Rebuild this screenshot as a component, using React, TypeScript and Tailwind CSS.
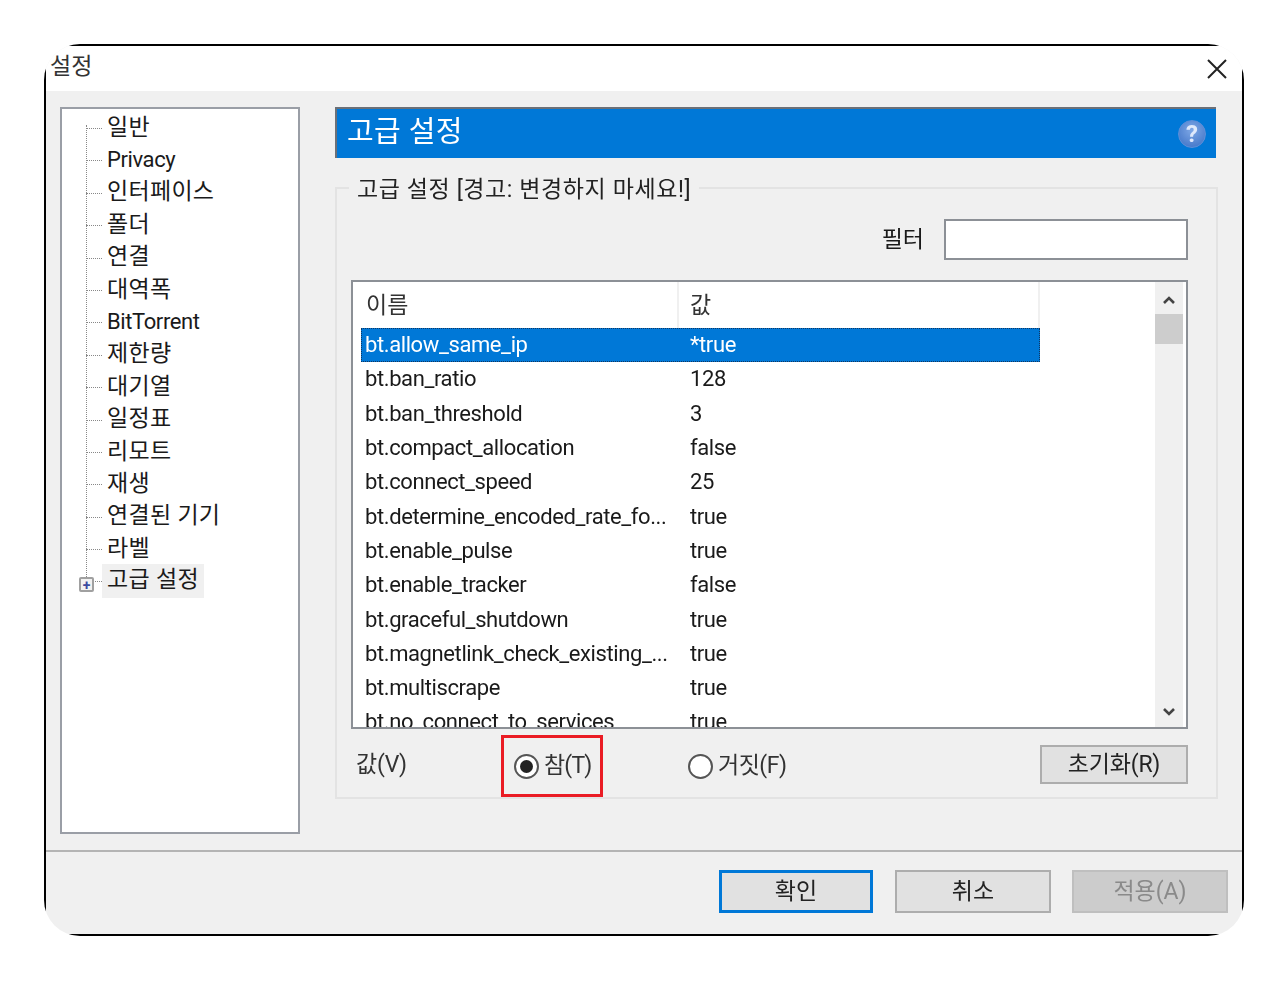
const treeItems = [
  "일반",
  "Privacy",
  "인터페이스",
  "폴더",
  "연결",
  "대역폭",
  "BitTorrent",
  "제한량",
  "대기열",
  "일정표",
  "리모트",
  "재생",
  "연결된 기기",
  "라벨",
  "고급 설정",
];

const rows = [
  ["bt.allow_same_ip", "*true"],
  ["bt.ban_ratio", "128"],
  ["bt.ban_threshold", "3"],
  ["bt.compact_allocation", "false"],
  ["bt.connect_speed", "25"],
  ["bt.determine_encoded_rate_fo...", "true"],
  ["bt.enable_pulse", "true"],
  ["bt.enable_tracker", "false"],
  ["bt.graceful_shutdown", "true"],
  ["bt.magnetlink_check_existing_...", "true"],
  ["bt.multiscrape", "true"],
  ["bt.no_connect_to_services", "true"],
];

const Chevron = ({ up }: { up?: boolean }) => (
  <svg width="14" height="10" viewBox="0 0 14 10" fill="none" stroke="#444" strokeWidth="2.6">
    <path d={up ? "M2 8 L7 3 L12 8" : "M2 2 L7 7 L12 2"} />
  </svg>
);

const Tree = () => (
  <div className="relative w-[240px] h-[727px] shrink-0 bg-white border-2 border-[#9a9ea6] pt-[2px]">
    <div className="absolute left-[24px] top-[16px] h-[456px] border-l border-dotted border-[#888]" />
    {treeItems.map((item, i) => {
      const last = i === treeItems.length - 1;
      const latin = /[a-z]/i.test(item);
      return (
        <div key={item} className="flex items-center h-[32.4px]">
          <div className="relative w-[45px] h-full shrink-0">
            <div className="absolute left-[24px] top-[17px] w-[16px] border-t border-dotted border-[#888]" />
            {last && (
              <div className="absolute left-[17px] top-[13px] w-[15px] h-[15px] bg-[#f2f2f2] border-2 border-[#a0a0a0] rounded-[2px] flex items-center justify-center text-[#3b4aa0] text-[14px] leading-none font-bold">
                +
              </div>
            )}
          </div>
          <span
            className={
              last
                ? "bg-[#f0f0f0] px-[5px] -ml-[5px] h-[34px] leading-[32px] tracking-[0.3px]"
                : latin
                  ? "text-[22px] tracking-[-0.4px]"
                  : "tracking-[0.3px]"
            }
          >
            {item}
          </span>
        </div>
      );
    })}
  </div>
);

const AdvancedTable = () => (
  <div className="relative h-[449px] mt-[20px] bg-white border-2 border-[#8c9096] overflow-hidden">
    <div className="flex h-full">
      <div className="w-[679px] shrink-0 ml-[8px]">
        <div className="flex h-[46px] items-center">
          <div className="w-[318px] h-full pl-[5px] flex items-center border-r-2 border-[#f0f0f0] text-[#333]">이름</div>
          <div className="flex-1 h-full pl-[11px] flex items-center border-r-2 border-[#f0f0f0] text-[#333]">값</div>
        </div>
        {rows.map(([name, value], i) => (
          <div
            key={name}
            className={
              i === 0
                ? "flex items-center h-[34.3px] text-[22px] tracking-[-0.4px] bg-[#0078d7] text-white outline-1 outline-dotted -outline-offset-1 outline-[#12365f]"
                : "flex items-center h-[34.3px] text-[22px] tracking-[-0.4px]"
            }
          >
            <div className="w-[329px] pl-[4px] whitespace-nowrap">{name}</div>
            <div>{value}</div>
          </div>
        ))}
      </div>
      <div className="ml-auto mr-[3px] w-[28px] h-full bg-[#f0f0f0] flex flex-col items-center justify-between">
        <div className="w-full">
          <div className="h-[32px] pt-[3px] flex items-center justify-center">
            <Chevron up />
          </div>
          <div className="h-[30px] bg-[#cdcdcd]" />
        </div>
        <div className="h-[30px] flex items-center justify-center">
          <Chevron />
        </div>
      </div>
    </div>
  </div>
);

const SettingsGroup = () => (
  <fieldset className="mt-[15px] h-[626px] border-2 border-[#e3e3e3] pl-[14px] pr-[28px]">
    <legend className="-ml-[2px] px-[8px] h-[30px] leading-[33px] text-[#222] tracking-[0.6px]">
      고급 설정 [경고: 변경하지 마세요!]
    </legend>
    <div className="flex items-center justify-end gap-[20px] mt-[16px]">
      <span>필터</span>
      <div className="w-[244px] h-[41px] bg-white border-2 border-[#8c9096]" />
    </div>
    <AdvancedTable />
    <div className="flex items-center mt-[6px] h-[62px]">
      <span className="w-[150px] pl-[5px] text-[#333] -mt-[3px] tracking-[-0.2px]">값(V)</span>
      <div className="w-[102px] h-[62px] border-[3px] border-[#ea1c24] flex items-center pl-[10px] gap-[5px] text-[#333]">
        <span className="w-[25px] h-[25px] rounded-full bg-white border-2 border-[#555] flex items-center justify-center shrink-0">
          <span className="w-[13px] h-[13px] rounded-full bg-[#222]" />
        </span>
        <span className="whitespace-nowrap -mt-[2px] tracking-[-0.8px]">참(T)</span>
      </div>
      <div className="ml-[85px] flex items-center gap-[5px] text-[#333]">
        <span className="w-[25px] h-[25px] rounded-full bg-white border-2 border-[#555]" />
        <span className="-mt-[2px] tracking-[-0.5px]">거짓(F)</span>
      </div>
      <button className="ml-auto -mt-[3px] w-[148px] h-[39px] bg-[#e1e1e1] border-2 border-[#adadad] text-[#222] tracking-[-0.2px]">초기화(R)</button>
    </div>
  </fieldset>
);

export default function App() {
  return (
    <div className="min-h-[981px] bg-white p-[44px] text-[23px] leading-none text-[#1a1a1a] font-['Roboto','Noto_Sans_CJK_KR',sans-serif]">
      <div className="w-[1200px] h-[892px] rounded-[36px] overflow-hidden blur-[0.4px]">
        <div className="flex flex-col h-full border-2 border-black bg-[#f0f0f0]">
          <div className="flex items-center justify-between h-[45px] shrink-0 bg-white pl-[4px] pr-[15px]">
            <span className="text-[#333] -mt-[4px]">설정</span>
            <svg width="20" height="20" viewBox="0 0 20 20" stroke="#222" strokeWidth="2">
              <path d="M1 1 L19 19 M19 1 L1 19" />
            </svg>
          </div>

          <div className="flex flex-1 pl-[14px] pt-[16px]">
            <Tree />
            <div className="ml-[35px] w-[883px] shrink-0">
              <div className="flex items-center justify-between w-[881px] h-[51px] bg-[#0078d7] border-t-2 border-l-2 border-[#6b7078] pl-[10px] pr-[10px] text-white text-[29px]">
                <span className="-mt-[2px] tracking-[0.4px]">고급 설정</span>
                <span className="w-[28px] h-[28px] rounded-full bg-[radial-gradient(circle_at_50%_35%,#7fa8e6,#3a6fc4)] border border-[#5f8fd8] flex items-center justify-center text-[#dfe9fb] text-[24px] font-bold">
                  ?
                </span>
              </div>
              <SettingsGroup />
            </div>
          </div>

          <div className="flex items-center justify-end h-[84px] shrink-0 border-t-2 border-[#b4b4b4] pr-[14px] pb-[4px]">
            <button className="w-[154px] h-[43px] bg-[#e1e1e1] border-[3px] border-[#0078d7] text-[#222]">확인</button>
            <button className="ml-[22px] w-[156px] h-[43px] bg-[#e1e1e1] border-2 border-[#adadad] text-[#222]">취소</button>
            <button className="ml-[21px] w-[156px] h-[43px] bg-[#cccccc] border-2 border-[#bfbfbf] text-[#8a8a8a]">적용(A)</button>
          </div>
        </div>
      </div>
    </div>
  );
}
